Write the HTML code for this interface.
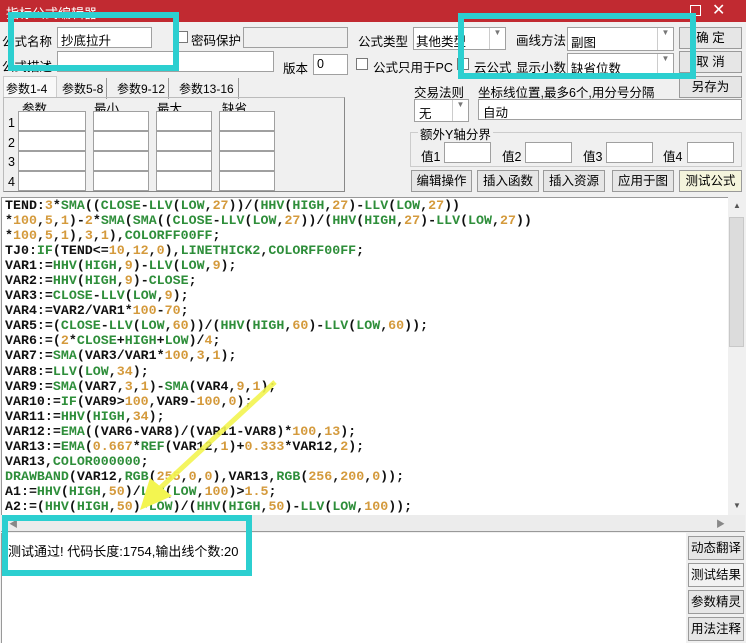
<!DOCTYPE html>
<html><head><meta charset="utf-8"><style>
*{margin:0;padding:0;box-sizing:border-box}
body{width:746px;height:643px;overflow:hidden;background:#f0f0f0;font-family:"Liberation Sans","Noto Sans CJK SC",sans-serif;font-size:12.5px;color:#000;position:relative}
.a{position:absolute;white-space:nowrap}
.in{position:absolute;background:#fff;border:1px solid #a0a0a0}
.btn{position:absolute;background:#e6e6e6;border:1px solid #9a9a9a;text-align:center;font-size:12.5px;line-height:20px}
.dd{position:absolute;width:16px;border-left:1px solid #ccc;right:0;top:0;bottom:0;font-size:8px;color:#777;text-align:center}
.cb{position:absolute;width:12px;height:12px;border:1px solid #777;background:#fff}
.cy{position:absolute;border:6px solid #2ccfd0}
#code{position:absolute;left:1px;top:197px;width:727px;height:318px;background:#fff;overflow:hidden;border-top:1px solid #999;border-left:1px solid #999}
#code pre{font-family:"Liberation Mono",monospace;font-weight:bold;font-size:13.3px;line-height:15.05px;padding:0 0 0 3px;color:#111}
.g{color:#2e8e3a}.n{color:#d49a3c}
</style></head><body>
<div class="a" style="left:0;top:0;width:746px;height:22px;background:#c12a31"></div>
<div class="a" style="left:6px;top:3px;color:#fff;font-size:13px">指标公式编辑器</div>
<div class="a" style="left:690px;top:5px;width:11px;height:11px;border:1px solid #fff"></div>
<div class="a" style="left:712px;top:0;color:#fff;font-size:16px">✕</div>

<div class="a" style="left:2px;top:31px">公式名称</div>
<div class="in" style="left:57px;top:27px;width:95px;height:21px;padding:2px 3px">抄底拉升</div>
<div class="cb" style="left:176px;top:31px"></div>
<div class="a" style="left:191px;top:30px">密码保护</div>
<div class="in" style="left:243px;top:27px;width:105px;height:21px;background:#f0f0f0"></div>
<div class="a" style="left:358px;top:31px">公式类型</div>
<div class="in" style="left:413px;top:27px;width:93px;height:23px;padding:3px 2px">其他类型<div class="dd">▼</div></div>
<div class="a" style="left:516px;top:30px">画线方法</div>
<div class="in" style="left:567px;top:27px;width:107px;height:24px;padding:4px 3px">副图<div class="dd">▼</div></div>
<div class="btn" style="left:679px;top:27px;width:63px;height:22px">确 定</div>

<div class="a" style="left:2px;top:56px">公式描述</div>
<div class="in" style="left:57px;top:51px;width:217px;height:21px"></div>
<div class="a" style="left:283px;top:58px">版本</div>
<div class="in" style="left:313px;top:54px;width:35px;height:21px;padding:2px 3px">0</div>
<div class="cb" style="left:356px;top:58px"></div>
<div class="a" style="left:373px;top:57px">公式只用于PC</div>
<div class="cb" style="left:457px;top:58px"></div>
<div class="a" style="left:474px;top:57px">云公式</div>
<div class="a" style="left:516px;top:57px">显示小数</div>
<div class="in" style="left:567px;top:53px;width:107px;height:24px;padding:4px 3px">缺省位数<div class="dd">▼</div></div>
<div class="btn" style="left:679px;top:51px;width:63px;height:22px">取 消</div>

<div class="a" style="left:3px;top:76px;width:54px;height:22px;border:1px solid #ccc;border-bottom:none;background:#f8f8f8;padding:3px 2px;font-size:12px">参数1-4</div>
<div class="a" style="left:59px;top:78px;padding:2px 3px;font-size:12px;border-right:1px solid #999">参数5-8</div>
<div class="a" style="left:114px;top:78px;padding:2px 3px;font-size:12px;border-right:1px solid #999">参数9-12</div>
<div class="a" style="left:175px;top:78px;padding:2px 4px;font-size:12px;border-right:1px solid #999">参数13-16</div>
<div class="a" style="left:3px;top:97px;width:342px;height:95px;border:1px solid #bbb;border-right-color:#888;border-bottom-color:#888"></div>
<div class="a" style="left:22px;top:98px">参数</div><div class="a" style="left:94px;top:98px">最小</div><div class="a" style="left:157px;top:98px">最大</div><div class="a" style="left:222px;top:98px">缺省</div>
<div class="a" style="left:8px;top:114px;line-height:19.5px">1<br>2<br>3<br>4</div>
<div class="in" style="left:18px;top:111px;width:68px;height:20px"></div><div class="in" style="left:93px;top:111px;width:56px;height:20px"></div><div class="in" style="left:156px;top:111px;width:56px;height:20px"></div><div class="in" style="left:219px;top:111px;width:56px;height:20px"></div>
<div class="in" style="left:18px;top:131px;width:68px;height:20px"></div><div class="in" style="left:93px;top:131px;width:56px;height:20px"></div><div class="in" style="left:156px;top:131px;width:56px;height:20px"></div><div class="in" style="left:219px;top:131px;width:56px;height:20px"></div>
<div class="in" style="left:18px;top:151px;width:68px;height:20px"></div><div class="in" style="left:93px;top:151px;width:56px;height:20px"></div><div class="in" style="left:156px;top:151px;width:56px;height:20px"></div><div class="in" style="left:219px;top:151px;width:56px;height:20px"></div>
<div class="in" style="left:18px;top:171px;width:68px;height:20px"></div><div class="in" style="left:93px;top:171px;width:56px;height:20px"></div><div class="in" style="left:156px;top:171px;width:56px;height:20px"></div><div class="in" style="left:219px;top:171px;width:56px;height:20px"></div>

<div class="a" style="left:414px;top:82px">交易法则</div>
<div class="a" style="left:478px;top:82px">坐标线位置,最多6个,用分号分隔</div>
<div class="btn" style="left:679px;top:76px;width:63px;height:22px">另存为</div>
<div class="in" style="left:414px;top:99px;width:55px;height:23px;padding:3px 4px">无<div class="dd">▼</div></div>
<div class="in" style="left:478px;top:99px;width:264px;height:21px;padding:2px 4px">自动</div>
<div class="a" style="left:410px;top:132px;width:332px;height:35px;border:1px solid #ccc"></div>
<div class="a" style="left:418px;top:124px;background:#f0f0f0;padding:0 2px">额外Y轴分界</div>
<div class="a" style="left:421px;top:146px">值1</div><div class="in" style="left:444px;top:142px;width:47px;height:21px"></div>
<div class="a" style="left:502px;top:146px">值2</div><div class="in" style="left:525px;top:142px;width:47px;height:21px"></div>
<div class="a" style="left:583px;top:146px">值3</div><div class="in" style="left:606px;top:142px;width:47px;height:21px"></div>
<div class="a" style="left:663px;top:146px">值4</div><div class="in" style="left:687px;top:142px;width:47px;height:21px"></div>
<div class="btn" style="left:411px;top:170px;width:61px;height:22px">编辑操作</div>
<div class="btn" style="left:477px;top:170px;width:62px;height:22px">插入函数</div>
<div class="btn" style="left:543px;top:170px;width:62px;height:22px">插入资源</div>
<div class="btn" style="left:612px;top:170px;width:62px;height:22px">应用于图</div>
<div class="btn" style="left:679px;top:170px;width:63px;height:22px;background:#f4f4dc">测试公式</div>

<div id="code"><pre>TEND:<span class="n">3</span>*<span class="g">SMA</span>((<span class="g">CLOSE</span>-<span class="g">LLV</span>(<span class="g">LOW</span>,<span class="n">27</span>))/(<span class="g">HHV</span>(<span class="g">HIGH</span>,<span class="n">27</span>)-<span class="g">LLV</span>(<span class="g">LOW</span>,<span class="n">27</span>))
*<span class="n">100</span>,<span class="n">5</span>,<span class="n">1</span>)-<span class="n">2</span>*<span class="g">SMA</span>(<span class="g">SMA</span>((<span class="g">CLOSE</span>-<span class="g">LLV</span>(<span class="g">LOW</span>,<span class="n">27</span>))/(<span class="g">HHV</span>(<span class="g">HIGH</span>,<span class="n">27</span>)-<span class="g">LLV</span>(<span class="g">LOW</span>,<span class="n">27</span>))
*<span class="n">100</span>,<span class="n">5</span>,<span class="n">1</span>),<span class="n">3</span>,<span class="n">1</span>),<span class="g">COLORFF00FF</span>;
TJ0:<span class="g">IF</span>(TEND&lt;=<span class="n">10</span>,<span class="n">12</span>,<span class="n">0</span>),<span class="g">LINETHICK2</span>,<span class="g">COLORFF00FF</span>;
VAR1:=<span class="g">HHV</span>(<span class="g">HIGH</span>,<span class="n">9</span>)-<span class="g">LLV</span>(<span class="g">LOW</span>,<span class="n">9</span>);
VAR2:=<span class="g">HHV</span>(<span class="g">HIGH</span>,<span class="n">9</span>)-<span class="g">CLOSE</span>;
VAR3:=<span class="g">CLOSE</span>-<span class="g">LLV</span>(<span class="g">LOW</span>,<span class="n">9</span>);
VAR4:=VAR2/VAR1*<span class="n">100</span>-<span class="n">70</span>;
VAR5:=(<span class="g">CLOSE</span>-<span class="g">LLV</span>(<span class="g">LOW</span>,<span class="n">60</span>))/(<span class="g">HHV</span>(<span class="g">HIGH</span>,<span class="n">60</span>)-<span class="g">LLV</span>(<span class="g">LOW</span>,<span class="n">60</span>));
VAR6:=(<span class="n">2</span>*<span class="g">CLOSE</span>+<span class="g">HIGH</span>+<span class="g">LOW</span>)/<span class="n">4</span>;
VAR7:=<span class="g">SMA</span>(VAR3/VAR1*<span class="n">100</span>,<span class="n">3</span>,<span class="n">1</span>);
VAR8:=<span class="g">LLV</span>(<span class="g">LOW</span>,<span class="n">34</span>);
VAR9:=<span class="g">SMA</span>(VAR7,<span class="n">3</span>,<span class="n">1</span>)-<span class="g">SMA</span>(VAR4,<span class="n">9</span>,<span class="n">1</span>);
VAR10:=<span class="g">IF</span>(VAR9&gt;<span class="n">100</span>,VAR9-<span class="n">100</span>,<span class="n">0</span>);
VAR11:=<span class="g">HHV</span>(<span class="g">HIGH</span>,<span class="n">34</span>);
VAR12:=<span class="g">EMA</span>((VAR6-VAR8)/(VAR11-VAR8)*<span class="n">100</span>,<span class="n">13</span>);
VAR13:=<span class="g">EMA</span>(<span class="n">0.667</span>*<span class="g">REF</span>(VAR12,<span class="n">1</span>)+<span class="n">0.333</span>*VAR12,<span class="n">2</span>);
VAR13,<span class="g">COLOR000000</span>;
<span class="g">DRAWBAND</span>(VAR12,<span class="g">RGB</span>(<span class="n">255</span>,<span class="n">0</span>,<span class="n">0</span>),VAR13,<span class="g">RGB</span>(<span class="n">256</span>,<span class="n">200</span>,<span class="n">0</span>));
A1:=<span class="g">HHV</span>(<span class="g">HIGH</span>,<span class="n">50</span>)/<span class="g">LLV</span>(<span class="g">LOW</span>,<span class="n">100</span>)&gt;<span class="n">1.5</span>;
A2:=(<span class="g">HHV</span>(<span class="g">HIGH</span>,<span class="n">50</span>)-<span class="g">LOW</span>)/(<span class="g">HHV</span>(<span class="g">HIGH</span>,<span class="n">50</span>)-<span class="g">LLV</span>(<span class="g">LOW</span>,<span class="n">100</span>));</pre></div>
<div class="a" style="left:728px;top:199px;width:17px;height:316px;background:#f0f0f0"></div>
<div class="a" style="left:729px;top:217px;width:15px;height:130px;background:#dcdcdc;border:1px solid #c8c8c8"></div>
<div class="a" style="left:733px;top:201px;font-size:8px;color:#555">▲</div>
<div class="a" style="left:733px;top:501px;font-size:8px;color:#555">▼</div>
<div class="a" style="left:1px;top:515px;width:744px;height:17px;background:#ececec;border-bottom:1px solid #999"></div>
<div class="a" style="left:9px;top:517px;font-size:9px;color:#888">◀</div>
<div class="a" style="left:716px;top:517px;font-size:9px;color:#888">▶</div>
<div class="a" style="left:1px;top:533px;width:685px;height:110px;background:#fff;border-left:1px solid #999"></div>
<div class="a" style="left:8px;top:541px;font-size:13px">测试通过! 代码长度:1754,输出线个数:20</div>
<div class="btn" style="left:688px;top:536px;width:56px;height:24px;line-height:22px">动态翻译</div>
<div class="btn" style="left:688px;top:563px;width:56px;height:24px;line-height:22px;background:#f2f2f2">测试结果</div>
<div class="btn" style="left:688px;top:590px;width:56px;height:24px;line-height:22px">参数精灵</div>
<div class="btn" style="left:688px;top:617px;width:56px;height:24px;line-height:22px">用法注释</div>

<svg class="a" style="left:0;top:0" width="746" height="643"><line x1="275" y1="382" x2="158" y2="490" stroke="#f3f550" stroke-width="5" opacity="0.9"/><polygon points="140,510 150,478 172,496" fill="#f3f550"/></svg>
<div class="cy" style="left:8px;top:12px;width:171px;height:59px"></div>
<div class="cy" style="left:458px;top:13px;width:238px;height:66px"></div>
<div class="cy" style="left:2px;top:515px;width:250px;height:61px"></div>
</body></html>
